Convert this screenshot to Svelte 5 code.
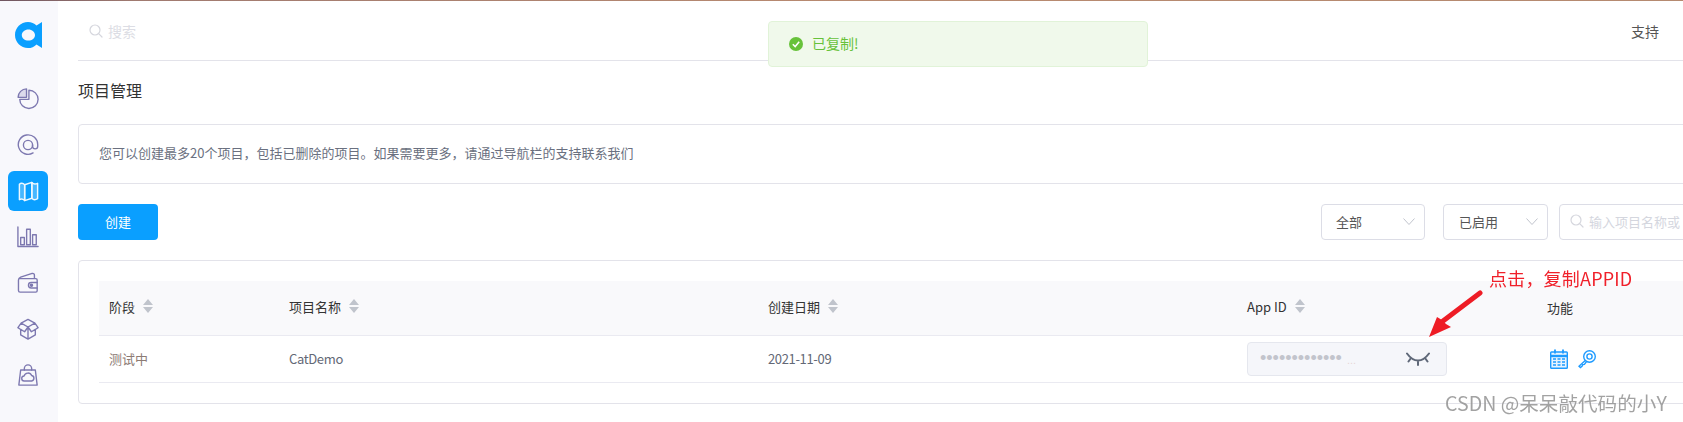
<script>
  const sort = ['阶段', '项目名称', '创建日期', 'App ID'];
</script>

{#snippet sortArrows()}
  <svg class="sort" viewBox="0 0 10 14" aria-hidden="true"><path d="M5 0 10 6H0ZM0 8H10L5 14Z" /></svg>
{/snippet}

{#snippet searchIcon()}
  <svg class="search-icon" viewBox="0 0 14 14" aria-hidden="true"><circle cx="6" cy="6" r="5" /><path d="M9.7 9.7 13 13" /></svg>
{/snippet}

{#snippet chevron()}
  <svg class="chevron" viewBox="0 0 12 7" aria-hidden="true"><path d="M.5.5 6 6.5 11.5.5" /></svg>
{/snippet}

<div class="topline"></div>
<div class="shell">
  <aside class="sidebar">
    <svg class="logo" viewBox="0 0 27 26" aria-hidden="true">
      <path fill-rule="evenodd" d="M27 0V26L21.5 22.4C19.3 24.8 16.3 26 13 26 5.8 26 0 20.2 0 13S5.8 0 13 0C16.3 0 19.3 1.2 21.5 3.6ZM13.4 7.4C9.7 7.4 6.8 9.9 6.8 13S9.7 18.6 13.4 18.6 20 16.1 20 13 17.1 7.4 13.4 7.4Z" />
    </svg>
    <nav class="nav">
      <div class="nav-item">
        <svg viewBox="0 0 24 24" aria-hidden="true">
          <path d="M13 2.4A10 10 0 1 1 3 12.4H13Z" />
          <path class="tint" d="M10.4 1A9.2 9.2 0 0 0 1.2 10.2H10.4Z" />
        </svg>
      </div>
      <div class="nav-item">
        <svg viewBox="0 0 24 24" aria-hidden="true">
          <path d="M17.5 20.6A10.6 10.6 0 1 1 22.6 12V13.4C22.6 15 21.4 16.2 19.8 16.2 18.2 16.2 17 15 17 13.4V12" />
          <circle cx="12" cy="12" r="5" />
        </svg>
      </div>
      <div class="nav-item active">
        <svg viewBox="0 0 24 24" aria-hidden="true">
          <path class="panel" d="M2.5 4.5C4 3 6 3 8 5V21.5C6 19.5 4 19.5 2.5 20.5Z" />
          <path d="M8 5 15.5 2.5V19L8 21.5Z" />
          <path class="panel" d="M15.5 2.5C17 4.5 19.5 4.5 21.5 3.5V19.5C19.5 20.8 17 20.8 15.5 19Z" />
        </svg>
      </div>
      <div class="nav-item">
        <svg viewBox="0 0 24 24" aria-hidden="true">
          <path d="M1 1V22.4H23" />
          <path d="M4 12.5H8V20.5H4ZM10.5 3.5H14.5V20.5H10.5ZM17 9.5H21V20.5H17Z" />
        </svg>
      </div>
      <div class="nav-item">
        <svg viewBox="0 0 24 24" aria-hidden="true">
          <path d="M3 7.2H20.5C21.5 7.2 22 7.8 22 8.7V20.5C22 21.5 21.4 22 20.5 22H3.4C2.3 22 1.6 21.4 1.6 20.3V8.8C1.6 6.8 2.6 6 4 5.5L16.5 1.6C18 1.2 19 2 19 3.5V7" />
          <path d="M22 11.5H15.5A2.8 2.8 0 0 0 15.5 17.5H22" />
          <circle class="dot" cx="15.8" cy="14.5" r="1.2" />
        </svg>
      </div>
      <div class="nav-item">
        <svg viewBox="0 0 24 24" aria-hidden="true">
          <path d="M12 1.5 4.5 5.5 1 10.5 4 12.5V18.5L12 23 20 18.5V12.5L23 10.5 19.5 5.5ZM4.5 5.5 12 9.8 19.5 5.5M12 9.8 8.3 15 4 12.5M12 9.8 15.7 15 20 12.5M12 9.8V23" />
        </svg>
      </div>
      <div class="nav-item">
        <svg viewBox="0 0 24 24" aria-hidden="true">
          <path d="M4 6.5H20L22 23H2Z" />
          <path d="M8 6.5V5A4 4 0 0 1 16 5V6.5" />
          <path d="M8 18.5A2.7 2.7 0 0 1 7.7 13.1 4.4 4.4 0 0 1 16 12.6 3 3 0 0 1 16 18.5Z" />
        </svg>
      </div>
    </nav>
  </aside>

  <main class="main">
    <header class="topbar">
      <div class="global-search">
        {@render searchIcon()}
        <span>搜索</span>
      </div>
      <span class="support">支持</span>
    </header>

    <h1>项目管理</h1>

    <div class="notice">您可以创建最多20个项目，包括已删除的项目。如果需要更多，请通过导航栏的支持联系我们</div>

    <div class="toolbar">
      <button class="create">创建</button>
      <div class="filters">
        <div class="select s1"><span>全部</span>{@render chevron()}</div>
        <div class="select s2"><span>已启用</span>{@render chevron()}</div>
        <div class="search-input">{@render searchIcon()}<span>输入项目名称或</span></div>
      </div>
    </div>

    <section class="card">
      <div class="row head">
        {#each sort as label}
          <div class="cell"><span>{label}</span>{@render sortArrows()}</div>
        {/each}
        <div class="cell func">功能</div>
      </div>
      <div class="row body">
        <div class="cell text">测试中</div>
        <div class="cell text latin">CatDemo</div>
        <div class="cell text latin">2021-11-09</div>
        <div class="cell">
          <div class="appid">
            <span class="dots">•••••••••••••<em>...</em></span>
            <svg class="eye" viewBox="0 0 24 14" aria-hidden="true">
              <path d="M1 1.5C5 7 9 8.5 12 8.5S19 7 23 1.5M5 6 2.5 9.5M12 8.5V13M19 6 21.5 9.5" />
            </svg>
          </div>
        </div>
        <div class="cell tools">
          <svg class="tool" viewBox="0 0 18 20" aria-hidden="true">
            <path class="cal-bg" d="M1 3H17V19H1Z" />
            <path d="M1.5 3H16.5C17 3 17.3 3.4 17.3 3.8V18.4C17.3 18.9 17 19.3 16.5 19.3H1.5C1 19.3 .7 18.9 .7 18.4V3.8C.7 3.4 1 3 1.5 3Z" />
            <path d="M.7 7H17.3" stroke-width="2.4" />
            <path d="M5 .5V4.5M13 .5V4.5" stroke-width="1.8" />
            <path d="M3 10H6M7.5 10H10.5M12 10H15M3 13H6M7.5 13H10.5M12 13H15M3 16H6M7.5 16H10.5M12 16H15" stroke-width="1.6" />
          </svg>
          <svg class="tool" viewBox="0 0 18 18" aria-hidden="true">
            <circle cx="11.5" cy="6.5" r="5.8" />
            <circle cx="11.5" cy="6.5" r="2.6" />
            <path d="M7.2 10.4 1 16.2 2.4 17.5 4 16.2 4.8 14.6 6.4 14.4 8.4 11.8" />
          </svg>
        </div>
      </div>
    </section>
  </main>
</div>

<div class="toast">
  <svg class="toast-icon" viewBox="0 0 14 14" aria-hidden="true">
    <circle cx="7" cy="7" r="7" />
    <path d="M3.8 7.2 6.2 9.6 10.2 4.8" />
  </svg>
  <span>已复制!</span>
</div>

<div class="annotation">点击，复制APPID</div>
<svg class="arrow" viewBox="0 0 60 50" aria-hidden="true">
  <path d="M56 3 19 31" class="arrow-line" />
  <path class="arrow-head" d="M5 47 13 27 18 30 22 34 27 37Z" />
</svg>
<div class="watermark">CSDN @呆呆敲代码的小Y</div>

<style>
  :global(body) {
    margin: 0;
    background: #fff;
    overflow: hidden;
    height: 422px;
    font-family: "Noto Sans CJK SC", "Liberation Sans", sans-serif;
  }

  .topline {
    height: 1px;
    background: linear-gradient(90deg, #6f5560 0, #a07a70 8%, #b88a70 50%, #b58a70 100%);
  }

  .shell {
    display: flex;
    width: 1760px;
    height: 421px;
  }

  .sidebar {
    flex: 0 0 58px;
    background: #f8f8fc;
    display: flex;
    flex-direction: column;
    align-items: center;
  }

  .logo {
    width: 27px;
    height: 26px;
    margin: 21px 1px 0 0;
    fill: #0a9fff;
  }

  .nav {
    display: flex;
    flex-direction: column;
    gap: 6px;
    margin-top: 31px;
    transform: translateX(-1px);
  }

  .nav-item {
    width: 40px;
    height: 40px;
    border-radius: 6px;
    display: flex;
    align-items: center;
    justify-content: center;
  }

  .nav-item svg {
    width: 22px;
    height: 22px;
    fill: none;
    stroke: #7d78b0;
    stroke-width: 1.5;
    stroke-linejoin: round;
    stroke-linecap: round;
  }

  .nav-item .tint { fill: #dcdaec; }
  .nav-item .dot { fill: #7d78b0; }

  .nav-item.active { background: #0a9fff; }
  .nav-item.active svg { stroke: #eef8ff; width: 23px; height: 23px; }
  .nav-item.active .panel { fill: rgba(255, 255, 255, 0.25); }

  .main {
    flex: 1;
    min-width: 0;
    padding-left: 20px;
    display: flex;
    flex-direction: column;
  }

  .topbar {
    height: 59px;
    border-bottom: 1px solid #e3e3ea;
    display: flex;
    align-items: center;
    justify-content: space-between;
    padding: 0 101px 0 11px;
    font-size: 14px;
    flex: none;
  }

  .global-search {
    display: flex;
    align-items: center;
    gap: 5px;
    color: #dcdde4;
  }

  .support { color: #555; }

  .search-icon {
    width: 14px;
    height: 14px;
    fill: none;
    stroke: #d5d6dd;
    stroke-width: 1.2;
    stroke-linecap: round;
  }

  h1 {
    margin: 0;
    height: 63px;
    box-sizing: border-box;
    padding-bottom: 6px;
    display: flex;
    align-items: center;
    font-size: 16px;
    font-weight: 400;
    color: #333;
    flex: none;
  }

  .notice {
    height: 60px;
    box-sizing: border-box;
    border: 1px solid #e3e3ea;
    border-radius: 4px;
    padding: 0 0 3px 20px;
    display: flex;
    align-items: center;
    font-size: 13px;
    color: #6a7080;
    flex: none;
  }

  .toolbar {
    display: flex;
    justify-content: space-between;
    margin-top: 20px;
    flex: none;
  }

  .create {
    width: 80px;
    height: 36px;
    border: 0;
    border-radius: 4px;
    background: #0a9fff;
    color: #fff;
    font: inherit;
    font-size: 13px;
    padding: 0 0 2px;
  }

  .filters {
    display: flex;
    gap: 18px;
  }

  .select, .search-input {
    height: 36px;
    box-sizing: border-box;
    border: 1px solid #dcdde6;
    border-radius: 4px;
    display: flex;
    align-items: center;
    font-size: 13px;
    padding-bottom: 2px;
  }

  .select {
    justify-content: space-between;
    color: #555;
    padding-left: 14px;
    padding-right: 9px;
    width: 105px;
  }

  .s1 { width: 104px; }
  .s2 { padding-left: 15px; }

  .search-input {
    width: 201px;
    margin-left: -7px;
    padding-left: 10px;
    gap: 5px;
    color: #d4d6de;
  }

  .chevron {
    width: 12px;
    height: 7px;
    fill: none;
    stroke: #c0c4cc;
    stroke-width: 1;
  }

  .card {
    margin-top: 20px;
    height: 144px;
    box-sizing: border-box;
    border: 1px solid #e3e3ea;
    border-radius: 4px;
    padding: 20px;
    flex: none;
  }

  .row {
    display: grid;
    grid-template-columns: 180px 479px 479px 300px 1fr;
    align-items: center;
    font-size: 13px;
    box-sizing: border-box;
  }

  .head {
    height: 55px;
    padding-bottom: 4px;
    background: #f9f9fb;
    border-bottom: 1px solid #eaeaf1;
    color: #333;
  }

  .body {
    height: 47px;
    border-bottom: 1px solid #eaeaf1;
    color: #636876;
  }

  .cell {
    padding-left: 10px;
    display: flex;
    align-items: center;
    gap: 8px;
  }

  .cell.func { margin-top: 3px; }
  .cell.text { padding-bottom: 2px; }
  .cell.text:first-child { color: #8c7b74; }
  .latin { letter-spacing: -0.35px; }

  .sort {
    width: 10px;
    height: 14px;
    fill: #c0c4cc;
  }

  .appid {
    width: 200px;
    height: 34px;
    border: 1px solid #e5e7ee;
    border-radius: 4px;
    background: #f5f6fa;
    display: flex;
    align-items: center;
    justify-content: space-between;
    padding: 0 16px 0 12px;
    box-sizing: border-box;
  }

  .dots {
    font-family: "Liberation Sans", sans-serif;
    font-size: 18px;
    line-height: 20px;
    color: #c2c4cc;
    white-space: nowrap;
  }

  .dots em {
    font-style: normal;
    color: #e8d6d6;
    margin-left: 5px;
    font-size: 11px;
  }

  .eye {
    width: 24px;
    height: 14px;
    fill: none;
    stroke: #5f6878;
    stroke-width: 2;
    stroke-linecap: round;
    flex: none;
  }

  .tools {
    padding-left: 13px;
    gap: 10px;
  }

  .tool {
    width: 18px;
    height: 20px;
    fill: none;
    stroke: #1e9bff;
    stroke-width: 1.4;
  }

  .tool .cal-bg { fill: #e8f4ff; stroke: none; }

  .toast {
    position: fixed;
    left: 768px;
    top: 21px;
    width: 380px;
    height: 46px;
    box-sizing: border-box;
    background: #f0f9eb;
    border: 1px solid #e1f3d8;
    border-radius: 4px;
    display: flex;
    align-items: center;
    gap: 9px;
    padding-left: 20px;
    color: #67c23a;
    font-size: 14px;
  }

  .toast span { margin-top: -2px; }

  .toast-icon {
    width: 14px;
    height: 14px;
    fill: #67c23a;
    flex: none;
  }

  .toast-icon path {
    fill: none;
    stroke: #fff;
    stroke-width: 1.5;
  }

  .annotation {
    position: fixed;
    left: 1489px;
    top: 265px;
    line-height: 26px;
    font-size: 18px;
    letter-spacing: 0.2px;
    color: #f0202a;
    white-space: nowrap;
  }

  .arrow {
    position: fixed;
    left: 1424px;
    top: 290px;
    width: 60px;
    height: 50px;
  }

  .arrow-line {
    stroke: #ee1c25;
    stroke-width: 5;
    stroke-linecap: round;
    fill: none;
  }

  .arrow-head { fill: #ee1c25; }

  .watermark {
    position: fixed;
    left: 1445px;
    top: 390px;
    line-height: 26px;
    font-size: 19.6px;
    color: rgba(105, 105, 105, 0.62);
    text-shadow: 0 0 2px #fff;
    white-space: nowrap;
  }
</style>
